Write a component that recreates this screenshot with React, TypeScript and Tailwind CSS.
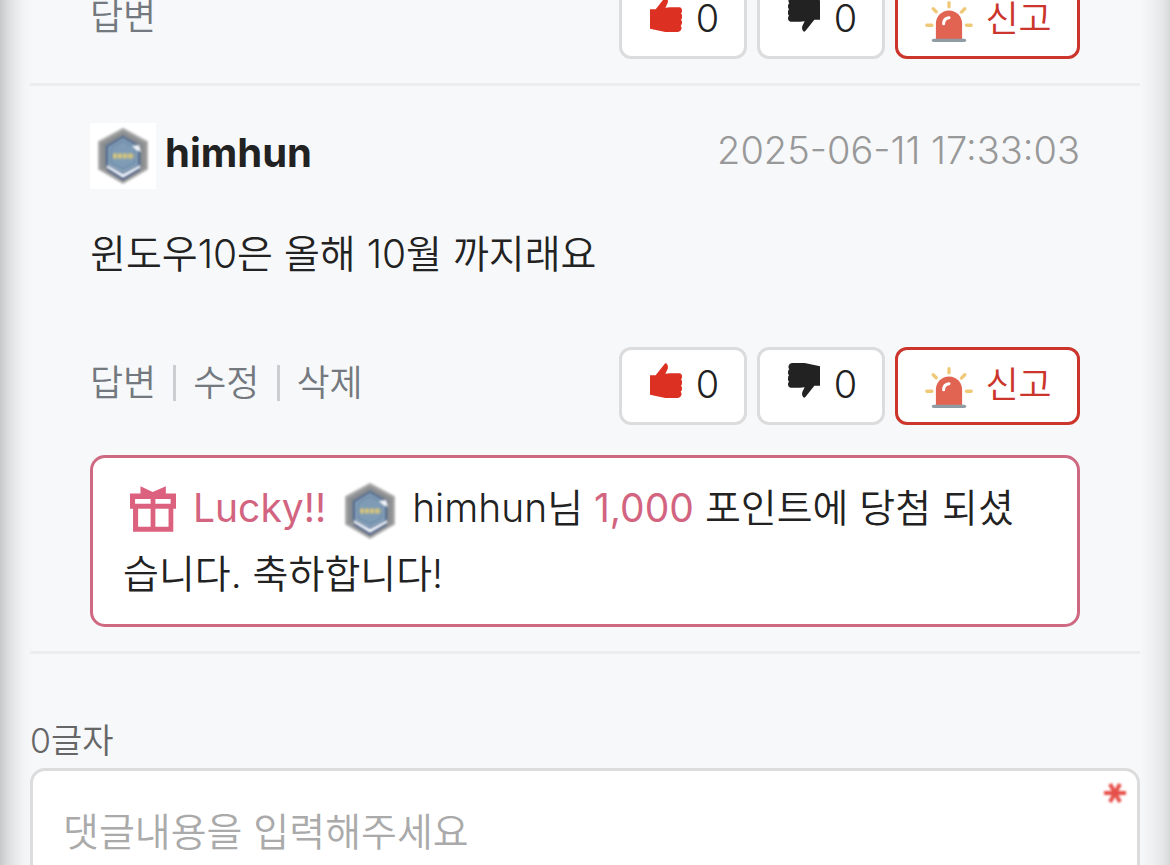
import React from 'react';

const ThumbIcon: React.FC<{ className: string }> = ({ className }) => (
  <svg viewBox="0 0 96 105" className={`h-[35px] w-8 ${className}`} fill="currentColor" aria-hidden="true">
    <path d="M0 37H17L42 5Q48-3 52 5Q55 10 53 18L46 32L60 31H88Q96 32 96 41Q96 47 93 49Q97 53 96 60Q96 66 93 68Q97 72 96 79Q95 85 92 86Q96 91 94 97Q92 104 84 105H46L0 95Z" />
  </svg>
);

const SirenIcon: React.FC = () => (
  <svg viewBox="0 0 142 122" className="mt-[2px] h-[41px] w-12" fill="none" aria-hidden="true">
    <path d="M71 5V17M5 72H20M123 72H137M24 23L33 32M118 23L108 33" stroke="#efc978" strokeWidth="10" strokeLinecap="round" />
    <path d="M32 113V67a39 39 0 0 1 78 0V113Z" fill="#e16452" />
    <path d="M55 68Q55 52 71 50" stroke="#fff" strokeWidth="9" strokeLinecap="round" />
    <rect x="20" y="112" width="102" height="10" rx="5" fill="#8f9ca3" />
  </svg>
);

const GiftIcon: React.FC = () => (
  <svg viewBox="0 0 136 135" className="ml-[7px] mr-[17px] inline-block size-[46px] align-[-10px]" fill="#db617f" aria-hidden="true">
    <path fillRule="evenodd" d="M31 0L67 17L106 0V22H136V67H128V135H9V67H0V22H31ZM15 38V52H61V38ZM75 38V52H120V38ZM24 67V120H61V67ZM75 67V120H114V67Z" />
  </svg>
);

const LevelBadge: React.FC<{ className: string }> = ({ className }) => (
  <svg viewBox="0 0 66 66" className={className} aria-hidden="true">
    <g className="blur-[1px]">
      <path d="M33 6L57 19V46L33 60L9 46V19Z" fill="#929394" stroke="#adadad" strokeWidth="2" strokeLinejoin="round" />
      <path d="M33 10L53 21V44L33 56L13 44V21Z" fill="#858a8f" />
      <path d="M33 13L50 23V43L33 54L16 43V23Z" fill="#4d6890" />
      <path d="M33 15L48 24V42L33 50L18 42V24Z" fill="#8ba3b8" />
      <path d="M33 18L45 25V40L33 46L21 40V25Z" fill="#7f9cb6" stroke="#5c7ea3" />
      <path d="M17 42L33 51L50 42V46L33 56L17 46Z" fill="#f2f6fb" />
      <path d="M17 46L33 56L50 46" fill="none" stroke="#465a82" strokeWidth="2" />
      <path d="M42 23L49 22L51 29L46 27Z" fill="#f5f8fb" />
      <path d="M23 33H44" stroke="#d8c67a" strokeWidth="5" strokeDasharray="4 1" />
    </g>
  </svg>
);

const Votes: React.FC = () => {
  const voteClass =
    'flex h-[78px] w-32 items-center justify-center gap-[14px] rounded-[12px] border-[3px] border-[#dcdcdc] bg-white pl-[3px] text-[38px] leading-none';
  return (
    <div className="flex gap-[10px]">
      <button type="button" aria-label="추천 0" className={voteClass}>
        <ThumbIcon className="mb-3 text-[#dc3022]" />
        <span className="pb-1">0</span>
      </button>
      <button type="button" aria-label="비추천 0" className={voteClass}>
        <ThumbIcon className="mb-3 rotate-180 text-[#222]" />
        <span className="pb-1">0</span>
      </button>
      <button
        type="button"
        className="flex h-[78px] w-[185px] items-center justify-center gap-3 rounded-[12px] border-[3px] border-[#cb352b] bg-white pl-[2px] text-[36px] leading-none text-[#cb352b]"
      >
        <SirenIcon />
        <span className="pb-[2px]">신고</span>
      </button>
    </div>
  );
};

const Actions: React.FC<{ items: string[] }> = ({ items }) => (
  <div className="flex h-[78px] items-center justify-between">
    <nav className="flex items-center pb-[6px] text-[36px] leading-none text-[#73797f]">
      {items.map((item, i) => (
        <React.Fragment key={item}>
          {i > 0 && <span className="mx-[17px] h-9 w-[3px] bg-[#cccdd0]" />}
          <a href="#">{item}</a>
        </React.Fragment>
      ))}
    </nav>
    <Votes />
  </div>
);

export default function App() {
  return (
    <main className="h-screen overflow-hidden bg-[linear-gradient(to_right,#c7c8ca,#dcddde_8px,#e9eaec_16px,#f3f4f6_24px,#f7f8fa_34px,#f7f8fa_calc(100%-30px),#eeeff1_calc(100%-16px),#e5e6e7_calc(100%-7px),#d8d9da)] px-[30px] font-['Inter','Noto_Sans_CJK_KR',sans-serif] font-[350] text-[#222]">
      {/* tail of the previous comment */}
      <article className="flex h-[86px] flex-col justify-end border-b-[3px] border-[#ededef] px-[60px] pb-6">
        <Actions items={['답변']} />
      </article>

      <article className="border-b-[3px] border-[#ededef] px-[60px] pb-6 pt-[37px]">
        <header className="flex h-[66px] items-center justify-between">
          <div className="flex items-center gap-[9px]">
            <LevelBadge className="size-[66px] bg-white" />
            <strong className="pb-[6px] text-[40px] font-bold leading-none">himhun</strong>
          </div>
          <time className="pb-3 text-[38px] font-light leading-none text-[#999]">2025-06-11 17:33:03</time>
        </header>

        <p className="mt-8 h-[126px] text-[39px] leading-[66px]">윈도우10은 올해 10월 까지래요</p>

        <Actions items={['답변', '수정', '삭제']} />

        <div className="mt-[30px] rounded-[15px] border-[3px] border-[#cf6881] bg-white px-[30px] py-[17px] text-[39px] leading-[66px] break-all">
          <GiftIcon />
          <span className="font-normal text-[#d2647f]">Lucky!!</span>
          <LevelBadge className="ml-[11px] mr-[9px] -my-2 inline-block size-[66px] align-[-14px]" />
          himhun님 <span className="font-normal text-[#d2647f]">1,000</span> 포인트에 당첨 되셨습니다. 축하합니다!
        </div>
      </article>

      <form className="pt-[63px]">
        <label htmlFor="comment" className="block h-[51px] text-[34px] leading-[48px] text-[#666]">
          0글자
        </label>
        <div className="relative">
          <textarea
            id="comment"
            required
            placeholder="댓글내용을 입력해주세요"
            className="block h-60 w-full resize-none rounded-[15px] border-[3px] border-[#dcdcdc] bg-white px-[30px] py-7 text-[39px] leading-[66px] shadow-none outline-none placeholder:text-[#aaa]"
          />
          <svg viewBox="0 0 22 22" className="absolute right-[14px] top-[14px] size-[22px] blur-[1px]" aria-hidden="true">
            <path d="M0 11H22M6 2L16 20M16 2L6 20" stroke="#e64f49" strokeWidth="4" />
          </svg>
        </div>
      </form>
    </main>
  );
}
